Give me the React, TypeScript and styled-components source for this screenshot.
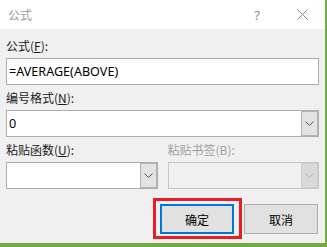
import React from "react";
import styled, { createGlobalStyle } from "styled-components";

const Global = createGlobalStyle`
  html, body { margin: 0; padding: 0; }
  body { background: #74ab3d; font-family: "Noto Sans", "Noto Sans CJK SC", sans-serif; }
  #root { width: 327px; height: 247px; overflow: hidden; }
`;

const Dialog = styled.div`
  width: 325px;
  height: 243px;
  background: #f0f0f0;
  display: flex;
  flex-direction: column;
  box-sizing: border-box;
`;

const TitleBar = styled.div`
  height: 29px;
  background: #ffffff;
  display: flex;
  align-items: center;
  padding-left: 8px;
  flex-shrink: 0;
`;

const Title = styled.span`
  flex: 1;
  font-family: "Noto Sans CJK SC", sans-serif;
  font-size: 12px;
  color: #999999;
`;

const TitleButton = styled.div<{ $w: number }>`
  width: ${(p) => p.$w}px;
  height: 29px;
  display: flex;
  align-items: center;
  justify-content: center;
  color: #8c8c8c;
  font-family: "Noto Sans", sans-serif;
  font-size: 13px;
`;

const Content = styled.div`
  flex: 1;
  display: flex;
  flex-direction: column;
  padding: 9px 6px 0 6px;
`;

const Label = styled.div<{ $disabled?: boolean }>`
  height: 16px;
  line-height: 16px;
  font-family: "Noto Sans CJK SC", sans-serif;
  font-size: 12px;
  color: ${(p) => (p.$disabled ? "#a0a0a0" : "#1a1a1a")};
  margin-bottom: 4px;
  white-space: nowrap;
`;

const U = styled.span`
  text-decoration: underline;
  text-underline-offset: 1px;
`;

const Field = styled.div`
  display: flex;
  flex-direction: column;
  margin-bottom: 5px;
  min-width: 0;
`;

const Box = styled.div<{ $h: number; $disabled?: boolean }>`
  height: ${(p) => p.$h}px;
  box-sizing: border-box;
  border: 1px solid ${(p) => (p.$disabled ? "#c6c6c6" : "#acacac")};
  background: ${(p) => (p.$disabled ? "#f0f0f0" : "#ffffff")};
  display: flex;
  align-items: stretch;
`;

const BoxText = styled.div`
  flex: 1;
  display: flex;
  align-items: center;
  padding-left: 2px;
  font-family: "Noto Sans", sans-serif;
  font-size: 12.6px;
  color: #000;
`;

const Drop = styled.div<{ $disabled?: boolean }>`
  width: 17px;
  box-sizing: border-box;
  border: 1px solid ${(p) => (p.$disabled ? "#cfcfcf" : "#b4b4b4")};
  background: ${(p) => (p.$disabled ? "#d9d9d9" : "#e3e3e3")};
  display: flex;
  align-items: center;
  justify-content: center;
`;

const Row = styled.div`
  display: grid;
  grid-template-columns: 1fr 1fr;
  column-gap: 10px;
`;

const Buttons = styled.div`
  display: flex;
  justify-content: flex-end;
  gap: 10px;
  padding-right: 1px;
  margin-top: 10px;
`;

const Button = styled.div<{ $default?: boolean }>`
  position: relative;
  width: 74px;
  height: 30px;
  box-sizing: border-box;
  background: #e1e1e1;
  border: ${(p) => (p.$default ? "2px solid #0078d7" : "1px solid #adadad")};
  display: flex;
  align-items: center;
  justify-content: center;
  font-family: "Noto Sans CJK SC", sans-serif;
  font-size: 12px;
  color: #000;
`;

const Highlight = styled.div`
  position: absolute;
  left: -9px;
  top: -8px;
  width: 89px;
  height: 41px;
  box-sizing: border-box;
  border: 3px solid #ea1c24;
  pointer-events: none;
`;

const Chevron = ({ color }: { color: string }) => (
  <svg width="9" height="5" viewBox="0 0 9 5">
    <polyline points="0.5,0.5 4.5,4.5 8.5,0.5" fill="none" stroke={color} strokeWidth="1" />
  </svg>
);

const CloseIcon = () => (
  <svg width="11" height="11" viewBox="0 0 11 11">
    <path d="M0.5 0.5 L10.5 10.5 M10.5 0.5 L0.5 10.5" stroke="#8c8c8c" strokeWidth="1" fill="none" />
  </svg>
);

export default function App() {
  return (
    <>
      <Global />
      <Dialog>
        <TitleBar>
          <Title>公式</Title>
          <TitleButton $w={44}>?</TitleButton>
          <TitleButton $w={46}>
            <CloseIcon />
          </TitleButton>
        </TitleBar>
        <Content>
          <Field>
            <Label>
              公式(<U>F</U>):
            </Label>
            <Box $h={27}>
              <BoxText>=AVERAGE(ABOVE)</BoxText>
            </Box>
          </Field>
          <Field>
            <Label>
              编号格式(<U>N</U>):
            </Label>
            <Box $h={27}>
              <BoxText>0</BoxText>
              <Drop>
                <Chevron color="#555" />
              </Drop>
            </Box>
          </Field>
          <Row>
            <Field>
              <Label>
                粘贴函数(<U>U</U>):
              </Label>
              <Box $h={27}>
                <BoxText />
                <Drop>
                  <Chevron color="#555" />
                </Drop>
              </Box>
            </Field>
            <Field>
              <Label $disabled>粘贴书签(B):</Label>
              <Box $h={27} $disabled>
                <BoxText />
                <Drop $disabled>
                  <Chevron color="#b0b0b0" />
                </Drop>
              </Box>
            </Field>
          </Row>
          <Buttons>
            <Button $default>
              确定
              <Highlight />
            </Button>
            <Button>取消</Button>
          </Buttons>
        </Content>
      </Dialog>
    </>
  );
}
